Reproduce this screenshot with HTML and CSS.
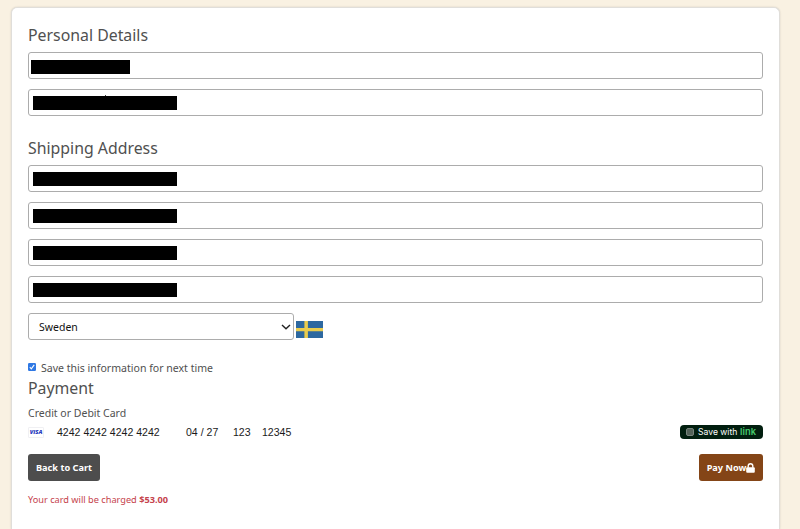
FILE: index.html
```html
<!DOCTYPE html>
<html lang="en">
<head>
<meta charset="utf-8">
<title>Checkout</title>
<link rel="stylesheet" href="styles.css">
</head>
<body>
<form class="card">
  <section class="group">
    <h2>Personal Details</h2>
    <div class="field name"><span class="mask short"></span></div>
    <div class="field email"><span class="mask"></span><i class="dot"></i></div>
  </section>
  <section class="group shipping">
    <h2>Shipping Address</h2>
    <div class="field"><span class="mask"></span></div>
    <div class="field"><span class="mask"></span></div>
    <div class="field"><span class="mask"></span></div>
    <div class="field"><span class="mask"></span></div>
    <div class="country">
      <div class="select"><span>Sweden</span>
        <svg width="10" height="6" viewBox="0 0 10 6"><path d="M1 .9 5 4.7 9 .9" fill="none" stroke="#222" stroke-width="1.4"/></svg>
      </div>
      <svg class="flag" width="27" height="17" viewBox="0 0 27 17"><path fill="#2d68a0" d="M0 0h27v17H0z"/><path fill="#e9cc4e" d="M8.4 0h3.5v17H8.4zM0 6.9h27v3.4H0z"/></svg>
    </div>
  </section>
  <label class="save">
    <svg width="8" height="8" viewBox="0 0 8 8"><rect width="8" height="8" rx="1.2" fill="#2f78e4"/><path d="m1.8 4.2 1.5 1.6 2.9-3.9" fill="none" stroke="#fff" stroke-width="1.1"/></svg>
    <span>Save this information for next time</span>
  </label>
  <section class="payment">
    <h2>Payment</h2>
    <p class="caption">Credit or Debit Card</p>
    <div class="cardrow">
      <span class="visa">VISA</span>
      <span class="number">4242 4242 4242 4242</span>
      <span class="expiry">04 / 27</span>
      <span class="cvc">123</span>
      <span class="zip">12345</span>
      <span class="link"><i class="box"></i><span class="with">Save with</span><b>link</b></span>
    </div>
    <div class="actions">
      <button type="button" class="back">Back to Cart</button>
      <button type="button" class="pay">Pay Now<svg width="9" height="10" viewBox="0 0 9 10"><path d="M2.2 4.8V3a2.3 2.3 0 0 1 4.6 0v1.8" fill="none" stroke="#fff" stroke-width="1.4"/><rect x=".2" y="4.2" width="8.6" height="5.6" rx="1" fill="#fff"/></svg></button>
    </div>
    <p class="charge">Your card will be charged <b>$53.00</b></p>
  </section>
</form>
</body>
</html>
```
FILE: styles.css
```css
* { box-sizing: border-box; }
html { height: 100%; }
body {
  display: flow-root;
  margin: 0;
  height: 100%;
  background: #f9f1e2;
  font-family: "Noto Sans", sans-serif;
  color: #505050;
}
.card {
  width: 769px;
  height: calc(100% - 7px);
  margin: 7px 0 0 11px;
  padding: 17px 16px 0;
  background: #fff;
  border: 1px solid #e0deda;
  border-bottom: 0;
  border-radius: 6px 6px 0 0;
  box-shadow: 0 0 2px rgba(0, 0, 0, .15);
}
h2 {
  margin: 0;
  height: 27px;
  line-height: 20px;
  font-size: 15.85px;
  font-weight: 400;
}
.field {
  position: relative;
  height: 27px;
  margin-bottom: 10px;
  padding: 6px 0 0 4px;
  border: 1px solid #acacac;
  border-radius: 3px;
}
.mask { display: block; width: 144px; height: 14px; background: #000; }
.name { padding: 7px 0 0 2px; }
.short { width: 99px; }
.dot { position: absolute; left: 76px; top: 5px; width: 1px; height: 1px; background: #444; }
.shipping { margin-top: 22px; }
.country { display: flex; align-items: flex-start; gap: 2px; }
.select {
  display: flex;
  align-items: center;
  justify-content: space-between;
  width: 266px;
  height: 27px;
  padding: 0 2px 0 10px;
  border: 1px solid #acacac;
  border-radius: 3px;
  color: #111;
  font-size: 10.5px;
}
.flag { margin-top: 8px; }
.save {
  display: flex;
  align-items: center;
  gap: 5px;
  height: 16px;
  margin-top: 20px;
  font-size: 10.55px;
}
.save svg { margin-top: -2px; }
.payment h2 { height: 29px; margin-top: 2px; line-height: 21px; }
.caption { margin: -2px 0 0; height: 18px; line-height: 16px; font-size: 10.5px; }
.cardrow {
  display: flex;
  align-items: center;
  height: 14px;
  margin-top: 2px;
  color: #1a1a1a;
  font: 10.55px "Liberation Sans", sans-serif;
}
.visa {
  width: 16px;
  height: 11px;
  border: 1px solid #f0f0f3;
  border-radius: 1px;
  color: #2638bd;
  font: italic 800 5.8px/9px "Open Sans", sans-serif;
  text-align: center;
}
.number { width: 129px; margin-left: 13px; }
.expiry { width: 47px; }
.cvc { width: 29px; }
.link {
  display: flex;
  align-items: center;
  width: 83px;
  height: 14px;
  margin-left: auto;
  padding-left: 6px;
  border-radius: 4px;
  background: #011e0f;
  color: #fff;
  font: 8.6px Inter, sans-serif;
}
.box { width: 8px; height: 8px; margin-right: 4px; border: 1px solid #77847d; border-radius: 2px; background: #536259; }
.with { width: 42px; white-space: nowrap; }
.link b { color: #46c96d; font-size: 9.4px; font-weight: 600; line-height: 12px; }
.actions { display: flex; justify-content: space-between; margin-top: 15px; }
button {
  display: flex;
  align-items: center;
  justify-content: center;
  height: 27px;
  padding: 0;
  border: 0;
  border-radius: 3px;
  color: #fff;
  font: 700 9.2px "Noto Sans", sans-serif;
}
.back { width: 72px; background: #4d4d4d; }
.pay { width: 64px; background: #844517; }
.charge { margin: 12px 0 0; font-size: 9.2px; line-height: 14px; color: #c5424c; }
```
